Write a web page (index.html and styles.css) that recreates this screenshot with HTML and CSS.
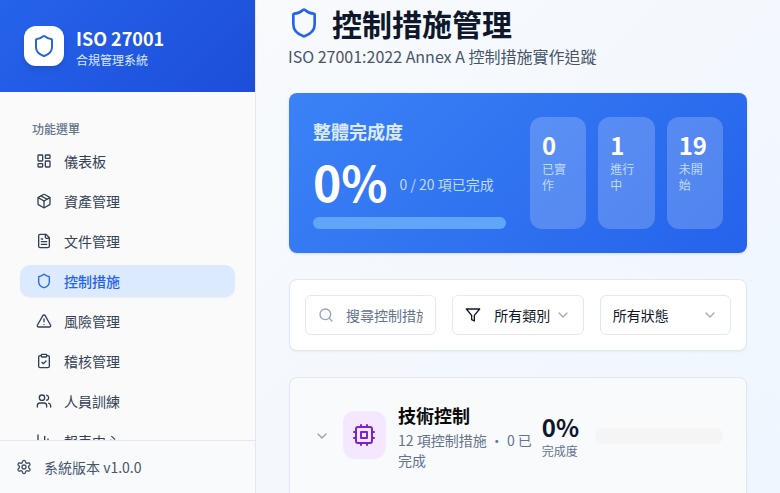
FILE: index.html
```html
<!DOCTYPE html>
<html lang="zh-Hant">
<head>
<meta charset="utf-8">
<title>控制措施管理</title>
<link rel="stylesheet" href="styles.css">
</head>
<body>
<svg class="defs" width="0" height="0" aria-hidden="true">
  <symbol id="shield" viewBox="0 0 24 24"><path d="M20 13c0 5-3.5 7.5-7.66 8.95a1 1 0 0 1-.67-.01C7.5 20.5 4 18 4 13V6a1 1 0 0 1 1-1c2 0 4.5-1.2 6.24-2.72a1.17 1.17 0 0 1 1.52 0C14.51 3.81 17 5 19 5a1 1 0 0 1 1 1z"/></symbol>
  <symbol id="chev" viewBox="0 0 24 24"><path d="m6 9 6 6 6-6"/></symbol>
</svg>
<div class="app">
  <aside class="sidebar">
    <header class="brand">
      <div class="logo"><svg class="ico ico-logo"><use href="#shield"/></svg></div>
      <div class="brand-text">
        <div class="brand-name">ISO 27001</div>
        <div class="brand-sub">合規管理系統</div>
      </div>
    </header>
    <nav class="nav">
      <div class="nav-label">功能選單</div>
      <a class="nav-item"><svg class="ico" viewBox="0 0 24 24"><rect x="3" y="3" width="7" height="9" rx="1"/><rect x="14" y="3" width="7" height="5" rx="1"/><rect x="14" y="12" width="7" height="9" rx="1"/><rect x="3" y="16" width="7" height="5" rx="1"/></svg>儀表板</a>
      <a class="nav-item"><svg class="ico" viewBox="0 0 24 24"><path d="M11 21.73a2 2 0 0 0 2 0l7-4A2 2 0 0 0 21 16V8a2 2 0 0 0-1-1.73l-7-4a2 2 0 0 0-2 0l-7 4A2 2 0 0 0 3 8v8a2 2 0 0 0 1 1.73z"/><path d="M12 22V12"/><path d="m3.3 7 8.7 5 8.7-5"/><path d="m7.5 4.27 9 5.15"/></svg>資產管理</a>
      <a class="nav-item"><svg class="ico" viewBox="0 0 24 24"><path d="M15 2H6a2 2 0 0 0-2 2v16a2 2 0 0 0 2 2h12a2 2 0 0 0 2-2V7Z"/><path d="M14 2v4a2 2 0 0 0 2 2h4"/><path d="M10 9H8"/><path d="M16 13H8"/><path d="M16 17H8"/></svg>文件管理</a>
      <a class="nav-item active"><svg class="ico"><use href="#shield"/></svg>控制措施</a>
      <a class="nav-item"><svg class="ico" viewBox="0 0 24 24"><path d="m21.73 18-8-14a2 2 0 0 0-3.48 0l-8 14A2 2 0 0 0 4 21h16a2 2 0 0 0 1.73-3"/><path d="M12 9v4"/><path d="M12 17h.01"/></svg>風險管理</a>
      <a class="nav-item"><svg class="ico" viewBox="0 0 24 24"><rect x="8" y="2" width="8" height="4" rx="1"/><path d="M16 4h2a2 2 0 0 1 2 2v14a2 2 0 0 1-2 2H6a2 2 0 0 1-2-2V6a2 2 0 0 1 2-2h2"/><path d="m9 14 2 2 4-4"/></svg>稽核管理</a>
      <a class="nav-item"><svg class="ico" viewBox="0 0 24 24"><path d="M16 21v-2a4 4 0 0 0-4-4H6a4 4 0 0 0-4 4v2"/><circle cx="9" cy="7" r="4"/><path d="M22 21v-2a4 4 0 0 0-3-3.87"/><path d="M16 3.13a4 4 0 0 1 0 7.75"/></svg>人員訓練</a>
      <a class="nav-item"><svg class="ico" viewBox="0 0 24 24"><path d="M3 3v16a2 2 0 0 0 2 2h16"/><path d="M18 17V9"/><path d="M13 17V5"/><path d="M8 17v-3"/></svg>報表中心</a>
    </nav>
    <footer class="side-foot">
      <svg class="ico" viewBox="0 0 24 24"><path d="M12.22 2h-.44a2 2 0 0 0-2 2v.18a2 2 0 0 1-1 1.73l-.43.25a2 2 0 0 1-2 0l-.15-.08a2 2 0 0 0-2.73.73l-.22.38a2 2 0 0 0 .73 2.73l.15.1a2 2 0 0 1 1 1.72v.51a2 2 0 0 1-1 1.74l-.15.09a2 2 0 0 0-.73 2.73l.22.38a2 2 0 0 0 2.73.73l.15-.08a2 2 0 0 1 2 0l.43.25a2 2 0 0 1 1 1.73V20a2 2 0 0 0 2 2h.44a2 2 0 0 0 2-2v-.18a2 2 0 0 1 1-1.73l.43-.25a2 2 0 0 1 2 0l.15.08a2 2 0 0 0 2.73-.73l.22-.39a2 2 0 0 0-.73-2.73l-.15-.08a2 2 0 0 1-1-1.74v-.5a2 2 0 0 1 1-1.74l.15-.09a2 2 0 0 0 .73-2.73l-.22-.38a2 2 0 0 0-2.73-.73l-.15.08a2 2 0 0 1-2 0l-.43-.25a2 2 0 0 1-1-1.73V4a2 2 0 0 0-2-2z"/><circle cx="12" cy="12" r="3"/></svg>
      <span>系統版本 v1.0.0</span>
    </footer>
  </aside>
  <main class="main">
    <div class="title-row">
      <svg class="ico ico-title"><use href="#shield"/></svg>
      <h1>控制措施管理</h1>
    </div>
    <p class="subtitle">ISO 27001:2022 Annex A 控制措施實作追蹤</p>

    <section class="hero">
      <div class="hero-left">
        <h2>整體完成度</h2>
        <div class="hero-value"><span class="pct">0%</span><span class="pct-note">0 / 20 項已完成</span></div>
        <div class="hero-bar"></div>
      </div>
      <div class="hero-stats">
        <div class="stat"><div class="stat-num">0</div><div class="stat-label">已實作</div></div>
        <div class="stat"><div class="stat-num">1</div><div class="stat-label">進行中</div></div>
        <div class="stat"><div class="stat-num">19</div><div class="stat-label">未開始</div></div>
      </div>
    </section>

    <section class="filters">
      <label class="control search">
        <svg class="ico ico-search" viewBox="0 0 24 24"><path d="m21 21-4.34-4.34"/><circle cx="11" cy="11" r="8"/></svg>
        <input type="text" placeholder="搜尋控制措施...">
      </label>
      <div class="control select">
        <svg class="ico ico-filter" viewBox="0 0 24 24"><path d="M22 3H2l8 9.46V19l4 2v-8.54L22 3z"/></svg>
        <span class="select-text">所有類別</span>
        <svg class="ico ico-chev"><use href="#chev"/></svg>
      </div>
      <div class="control select">
        <span class="select-text">所有狀態</span>
        <svg class="ico ico-chev"><use href="#chev"/></svg>
      </div>
    </section>

    <section class="group">
      <div class="group-head">
        <svg class="ico ico-groupchev"><use href="#chev"/></svg>
        <div class="group-icon"><svg class="ico ico-cpu" viewBox="0 0 24 24"><rect x="4" y="4" width="16" height="16" rx="2"/><rect x="9" y="9" width="6" height="6"/><path d="M15 2v2"/><path d="M15 20v2"/><path d="M2 15h2"/><path d="M2 9h2"/><path d="M20 15h2"/><path d="M20 9h2"/><path d="M9 2v2"/><path d="M9 20v2"/></svg></div>
        <div class="group-text">
          <h3>技術控制</h3>
          <p>12 項控制措施 ・ 0 已完成</p>
        </div>
        <div class="group-pct"><div class="group-num">0%</div><div class="group-cap">完成度</div></div>
        <div class="group-bar"></div>
      </div>
    </section>
  </main>
</div>
</body>
</html>
```

FILE: styles.css
```css
* { box-sizing: border-box; margin: 0; padding: 0; }
html, body { height: 100%; overflow: hidden; }
body {
  font-family: "Noto Sans CJK TC", "Noto Sans", sans-serif;
  color: #0f172a;
  background: #f8fafc;
}
.defs { position: absolute; }
.ico {
  width: 16px;
  height: 16px;
  flex: none;
  fill: none;
  stroke: currentColor;
  stroke-width: 2;
  stroke-linecap: round;
  stroke-linejoin: round;
}
.app { display: flex; height: 493px; overflow: hidden; }

/* sidebar */
.sidebar {
  width: 256px;
  flex: none;
  display: flex;
  flex-direction: column;
  background: #fafafa;
  border-right: 1px solid #e2e8f0;
}
.brand {
  height: 92px;
  flex: none;
  display: flex;
  align-items: center;
  gap: 12px;
  padding: 0 24px;
  background: linear-gradient(135deg, #2563eb, #1d4ed8);
  color: #fff;
}
.logo {
  width: 40px;
  height: 40px;
  display: flex;
  align-items: center;
  justify-content: center;
  background: #fff;
  border-radius: 12px;
  box-shadow: 0 4px 6px -1px rgba(0,0,0,.1), 0 2px 4px -2px rgba(0,0,0,.1);
  color: #2563eb;
}
.ico-logo { width: 24px; height: 24px; }
.brand-name { font-size: 18px; line-height: 26px; font-weight: 700; }
.brand-sub { font-size: 12px; line-height: 16px; color: #dbeafe; margin-top: 1px; }
.nav {
  flex: 1;
  min-height: 0;
  overflow: hidden;
  padding: 29px 20px 0;
  display: flex;
  flex-direction: column;
  gap: 8px;
}
.nav-label {
  font-size: 12px;
  line-height: 16px;
  font-weight: 500;
  color: #64748b;
  padding: 0 12px;
}
.nav-item {
  flex: none;
  height: 32px;
  display: flex;
  align-items: center;
  gap: 12px;
  padding: 0 16px;
  border-radius: 10px;
  font-size: 14px;
  color: #334155;
}
.nav-item.active {
  background: #dbeafe;
  color: #2563eb;
  font-weight: 500;
  box-shadow: 0 1px 2px rgba(0,0,0,.05);
}
.side-foot {
  height: 53px;
  flex: none;
  display: flex;
  align-items: center;
  gap: 12px;
  padding: 0 16px;
  border-top: 1px solid #e2e8f0;
  background: #f8fafc;
  font-size: 14px;
  color: #475569;
}

/* main */
.main {
  flex: 1;
  min-width: 0;
  overflow: hidden;
  padding: 0 32px;
  background: linear-gradient(135deg, #f8fafc, #eff6ff);
}
.title-row {
  display: flex;
  align-items: center;
  gap: 12px;
  height: 46px;
}
.ico-title { width: 32px; height: 32px; color: #2563eb; }
h1 { font-size: 30px; line-height: 36px; font-weight: 700; color: #0f172a; }
.subtitle { font-size: 16px; line-height: 24px; color: #475569; margin-top: -2px; }

.hero {
  margin: 25px 1px 0;
  height: 160px;
  display: grid;
  grid-template-columns: minmax(0, 1fr) minmax(0, 1fr);
  gap: 24px;
  padding: 24px;
  border-radius: 8px;
  color: #fff;
  background: linear-gradient(135deg, #3b82f6, #2563eb);
  box-shadow: 0 1px 3px rgba(0,0,0,.12);
}
.hero h2 { font-size: 18px; line-height: 28px; font-weight: 700; color: #dbeafe; }
.hero-value { display: flex; align-items: center; gap: 12px; margin-top: 6px; }
.pct { font-size: 48px; line-height: 60px; font-weight: 700; }
.pct-note { font-size: 14px; line-height: 20px; color: #bfdbfe; margin-top: 6px; }
.hero-bar { height: 12px; margin-top: 6px; border-radius: 6px; background: #60a5fa; }
.hero-stats { display: grid; grid-template-columns: repeat(3, minmax(0, 1fr)); gap: 12px; }
.stat { padding: 12px; border-radius: 12px; background: rgba(255,255,255,.2); }
.stat-num { font-size: 24px; line-height: 32px; font-weight: 700; }
.stat-label { font-size: 12px; line-height: 16px; color: #bfdbfe; }

.filters {
  margin: 26px 1px 0;
  height: 72px;
  display: grid;
  grid-template-columns: repeat(3, minmax(0, 1fr));
  gap: 16px;
  padding: 15px;
  background: #fff;
  border: 1px solid #e2e8f0;
  border-radius: 8px;
  box-shadow: 0 1px 2px rgba(0,0,0,.05);
}
.control {
  height: 40px;
  display: flex;
  align-items: center;
  background: #fff;
  border: 1px solid #e2e8f0;
  border-radius: 6px;
  font-size: 14px;
  padding: 0 12px;
  color: #0f172a;
}
.search { gap: 12px; }
.ico-search { color: #94a3b8; }
.search input {
  flex: 1;
  min-width: 0;
  border: 0;
  outline: 0;
  background: none;
  font: inherit;
}
.search input::placeholder { color: #64748b; opacity: 1; }
.ico-filter { color: #0f172a; margin-right: 13px; }
.select-text { flex: 1; white-space: nowrap; margin-right: 4px; }
.ico-chev { color: #64748b; opacity: .6; }

.group {
  margin: 26px 1px 0;
  height: 160px;
  background: #f8fafc;
  border: 1px solid #e2e8f0;
  border-radius: 8px;
  box-shadow: 0 1px 2px rgba(0,0,0,.05);
}
.group-head {
  display: flex;
  align-items: center;
  padding: 23px 23px 24px 24px;
  gap: 12px;
}
.ico-groupchev { color: #94a3b8; margin-right: 1px; }
.group-icon {
  width: 43px;
  height: 48px;
  flex: none;
  margin-bottom: 1px;
  padding-right: 1px;
  display: flex;
  align-items: center;
  justify-content: center;
  border-radius: 12px;
  background: #f3e8ff;
}
.ico-cpu { width: 24px; height: 24px; color: #7e22ce; }
.group-text { flex: 1; min-width: 0; }
.group-text h3 { font-size: 18px; line-height: 28px; font-weight: 700; color: #0a0a0a; }
.group-text p { font-size: 14px; line-height: 20px; color: #64748b; margin-top: 1px; }
.group-pct { flex: none; margin: 0 4px 2px -6px; }
.group-num { font-size: 24px; line-height: 32px; font-weight: 700; color: #0f172a; }
.group-cap { font-size: 12px; line-height: 16px; color: #64748b; }
.group-bar { width: 128px; height: 16px; flex: none; border-radius: 8px; background: #f5f5f5; }
```
